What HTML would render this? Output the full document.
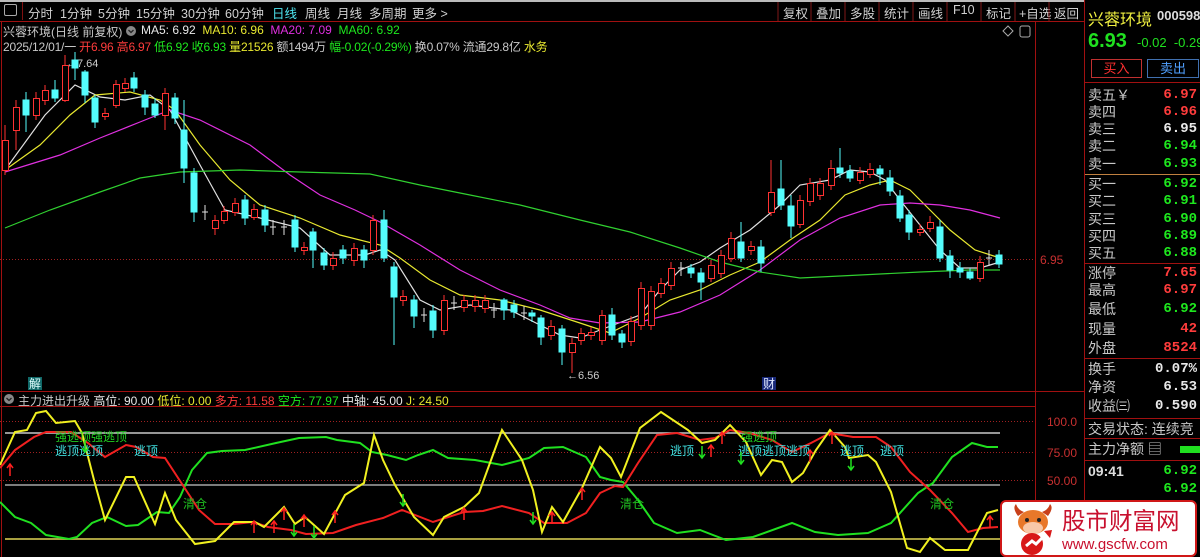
<!DOCTYPE html>
<html><head><meta charset="utf-8"><style>
*{margin:0;padding:0;box-sizing:border-box}
body{width:1200px;height:557px;background:#000;overflow:hidden;position:relative;font-family:"Liberation Sans","Noto Sans CJK SC",sans-serif;color:#c8c8c8}
.a{position:absolute;white-space:nowrap}
.tb{font-size:12.5px;top:3px;color:#d0d0d0}
.rp{position:absolute;left:1085px;width:115px;font-size:14px}
.row{position:absolute;left:3px;right:3px;height:18px;line-height:18px}
.row b{position:absolute;right:0;font-weight:bold;font-family:"Liberation Mono",monospace;font-size:14px}
.hl{position:absolute;left:0;right:0;height:1px;background:#a01010}
.r{color:#ff3c3c}.g{color:#1ee81e}.w{color:#e8e8e8}
</style></head><body>
<div class="a" style="left:0;top:0;width:1085px;height:2px;background:#bbb"></div>
<div class="a" style="left:4px;top:4px;width:13px;height:12px;border:1px solid #aaa;border-radius:2px"></div>
<div class="a" style="left:22px;top:2px;width:1px;height:18px;background:#801010"></div>
<div class="a tb" style="left:28px">分时</div>
<div class="a tb" style="left:60px">1分钟</div>
<div class="a tb" style="left:98px">5分钟</div>
<div class="a tb" style="left:136px">15分钟</div>
<div class="a tb" style="left:181px">30分钟</div>
<div class="a tb" style="left:225px">60分钟</div>
<div class="a tb" style="left:272px;color:#4ee6f0">日线</div>
<div class="a tb" style="left:305px">周线</div>
<div class="a tb" style="left:337px">月线</div>
<div class="a tb" style="left:369px">多周期</div>
<div class="a tb" style="left:412px">更多 &gt;</div>
<div class="a tb" style="left:783px">复权</div><div class="a tb" style="left:816px">叠加</div><div class="a tb" style="left:850px">多股</div><div class="a tb" style="left:884px">统计</div><div class="a tb" style="left:918px">画线</div><div class="a tb" style="left:953px">F10</div><div class="a tb" style="left:986px">标记</div><div class="a tb" style="left:1019px">+自选</div><div class="a tb" style="left:1054px">返回</div>
<svg class="a" style="left:0;top:0" width="1085" height="557">
<g stroke="#801818" stroke-width="1">
<line x1="778" y1="2" x2="778" y2="21"/><line x1="811" y1="2" x2="811" y2="21"/><line x1="845" y1="2" x2="845" y2="21"/><line x1="879" y1="2" x2="879" y2="21"/><line x1="913" y1="2" x2="913" y2="21"/><line x1="947" y1="2" x2="947" y2="21"/><line x1="981" y1="2" x2="981" y2="21"/><line x1="1015" y1="2" x2="1015" y2="21"/><line x1="1049" y1="2" x2="1049" y2="21"/>
</g>
<line x1="0" y1="21.5" x2="1085" y2="21.5" stroke="#a01010"/>
<line x1="1.5" y1="21" x2="1.5" y2="557" stroke="#a01010"/>
<line x1="1035.5" y1="21" x2="1035.5" y2="557" stroke="#a01010"/>
<line x1="1084.5" y1="0" x2="1084.5" y2="557" stroke="#a01010"/>
<line x1="0" y1="391.5" x2="1085" y2="391.5" stroke="#a01010"/>
<line x1="0" y1="406.5" x2="1035" y2="406.5" stroke="#a01010"/>
<path d="M1003 31 l5 -5 l5 5 l-5 5z" fill="none" stroke="#aaa"/>
<rect x="1020" y="26" width="10" height="11" fill="none" stroke="#aaa" rx="2"/>
<line x1="0" y1="259.5" x2="1035" y2="259.5" stroke="#a02020" stroke-dasharray="1 2"/>
<text x="1040" y="264" fill="#c83030" font-size="12">6.95</text>
<g fill="none" stroke-width="1.2">
<polyline stroke="#e0e0e0" points="5,170 45,115 75,85 100,97 125,100 150,95 170,110 200,165 225,210 260,218 300,228 330,255 365,255 380,250 395,260 420,300 440,310 470,305 510,310 540,325 560,335 580,338 600,330 640,315 660,290 680,270 700,262 720,248 750,230 780,205 800,185 830,180 850,170 870,172 885,180 900,200 920,225 940,250 960,268 980,268 1000,262"/>
<polyline stroke="#e8e830" points="5,170 40,145 70,115 95,95 130,92 160,100 175,110 200,145 230,180 260,205 300,218 340,235 380,245 400,258 430,280 460,295 500,300 540,310 580,323 610,333 640,318 670,300 700,290 730,275 760,262 790,240 820,220 845,195 870,185 890,180 910,190 930,210 950,230 975,250 1000,258"/>
<polyline stroke="#e030e0" points="5,172 60,155 100,138 140,122 170,110 200,120 250,145 290,175 320,195 355,210 380,222 420,245 460,270 500,290 540,305 570,318 600,323 640,322 680,312 720,295 760,270 800,240 840,218 880,205 910,203 940,205 970,210 1000,218"/>
<polyline stroke="#30d030" points="5,228 50,210 100,192 140,178 180,172 240,170 300,172 370,174 420,185 470,195 520,205 580,220 630,232 680,248 720,262 760,272 800,278 860,275 920,272 970,270 1000,270"/>
</g>
<text x="66" y="67" fill="#ccc" font-size="11">←7.64</text>
<text x="567" y="379" fill="#ccc" font-size="11">←6.56</text>
<rect x="28" y="377" width="14" height="13" fill="#106868"/><text x="29" y="388" fill="#e0ffff" font-size="12">解</text>
<rect x="762" y="377" width="14" height="13" fill="#182878"/><text x="763" y="388" fill="#e0e8ff" font-size="12">财</text>
<line x1="0" y1="421.5" x2="1035" y2="421.5" stroke="#a02020" stroke-dasharray="1 2"/>
<line x1="0" y1="452.5" x2="1035" y2="452.5" stroke="#a02020" stroke-dasharray="1 2"/>
<line x1="0" y1="480.5" x2="1035" y2="480.5" stroke="#a02020" stroke-dasharray="1 2"/>
<line x1="5" y1="433" x2="1000" y2="433" stroke="#c8c8c8" stroke-width="1.5"/>
<line x1="5" y1="485" x2="1000" y2="485" stroke="#c8c8c8" stroke-width="1.2"/>
<line x1="5" y1="539" x2="1000" y2="539" stroke="#a8a040" stroke-width="2"/>
<text x="1047" y="426" fill="#c83030" font-size="12">100.0</text>
<text x="1047" y="457" fill="#c83030" font-size="12">75.00</text>
<text x="1047" y="485" fill="#c83030" font-size="12">50.00</text>
<g fill="none" stroke-width="2">
<polyline stroke="#20e020" points="0,502 15,517 31,523 46,535 69,539 77,537 92,523 107,517 126,526 138,525 157,512 169,513 180,497 192,470 207,453 222,451 245,450 276,443 299,438 326,437 337,440 360,443 372,452 387,455 406,460 418,455 433,450 448,458 475,460 502,465 529,458 544,448 563,447 586,457 600,477 611,480 623,482 638,500 654,523 677,533 700,530 726,540 753,537 792,523 815,532 838,535 868,533 891,523 918,493 933,483 952,457 972,443 987,447 998,447"/>
<polyline stroke="#f02020" points="0,468 15,450 34,437 46,432 71,432 88,443 105,457 126,445 136,447 153,457 165,458 184,487 199,510 215,524 234,524 253,522 268,527 291,530 306,534 333,533 356,525 383,518 402,510 433,522 464,512 483,511 502,506 529,513 544,523 567,523 586,513 600,493 615,486 623,487 638,463 657,435 677,433 700,440 715,438 730,430 749,433 772,440 792,452 811,443 830,433 853,437 876,437 891,447 910,472 930,490 952,513 968,532 983,528 998,527"/>
<polyline stroke="#f0f020" points="0,465 15,432 27,430 36,413 46,411 56,423 75,421 82,433 94,480 105,520 126,477 134,477 155,524 165,493 176,520 195,544 215,541 234,522 255,522 264,527 284,507 295,524 305,517 324,534 345,495 364,483 374,435 383,460 395,485 414,517 433,535 444,517 464,507 479,493 502,430 522,460 533,490 542,532 552,507 563,522 582,488 600,447 611,458 621,477 640,428 661,412 688,430 702,443 715,440 730,425 746,442 761,475 772,460 782,462 792,482 803,473 816,450 830,430 845,447 849,458 868,455 876,462 891,492 907,548 920,552 930,538 945,550 968,550 987,513 998,510"/>
</g>
<g font-size="12">
<text x="55" y="441" fill="#20d020">强逃顶强逃顶</text>
<text x="55" y="455" fill="#40e0e0">逃顶逃顶</text>
<text x="134" y="455" fill="#40e0e0">逃顶</text>
<text x="183" y="508" fill="#20c020">清仓</text>
<text x="620" y="508" fill="#20c020">清仓</text>
<text x="930" y="508" fill="#20c020">清仓</text>
<text x="670" y="455" fill="#40e0e0">逃顶</text>
<text x="741" y="441" fill="#20d020">强逃顶</text>
<text x="738" y="455" fill="#40e0e0">逃顶逃顶逃顶</text>
<text x="840" y="455" fill="#40e0e0">逃顶</text>
<text x="880" y="455" fill="#40e0e0">逃顶</text>
</g>
<g stroke-width="1.5" fill="none">
<g stroke="#ff2020"><path d="M10 476v-12m-3 4l3-4l3 4"/><path d="M254 533v-12m-3 4l3-4l3 4"/><path d="M274 533v-12m-3 4l3-4l3 4"/><path d="M284 520v-12m-3 4l3-4l3 4"/><path d="M304 527v-12m-3 4l3-4l3 4"/><path d="M335 523v-12m-3 4l3-4l3 4"/><path d="M464 520v-12m-3 4l3-4l3 4"/><path d="M552 524v-12m-3 4l3-4l3 4"/><path d="M582 500v-12m-3 4l3-4l3 4"/><path d="M711 457v-12m-3 4l3-4l3 4"/><path d="M722 444v-12m-3 4l3-4l3 4"/><path d="M810 462v-12m-3 4l3-4l3 4"/><path d="M832 444v-12m-3 4l3-4l3 4"/><path d="M990 528v-12m-3 4l3-4l3 4"/></g>
<g stroke="#20e020"><path d="M85 440v12m-3-4l3 4l3-4"/><path d="M294 524v12m-3-4l3 4l3-4"/><path d="M314 526v12m-3-4l3 4l3-4"/><path d="M403 494v12m-3-4l3 4l3-4"/><path d="M533 512v12m-3-4l3 4l3-4"/><path d="M702 446v12m-3-4l3 4l3-4"/><path d="M741 452v12m-3-4l3 4l3-4"/><path d="M851 458v12m-3-4l3 4l3-4"/></g>
</g>
<circle cx="9" cy="399" r="5" fill="#888"/><path d="M6.5 398l2.5 2.5l2.5-2.5" stroke="#222" fill="none" stroke-width="1.3"/>
<circle cx="131" cy="31" r="5" fill="#888"/><path d="M128.5 30l2.5 2.5l2.5-2.5" stroke="#222" fill="none" stroke-width="1.3"/>
</svg>
<div class="a" style="left:3px;top:23px;font-size:12px">兴蓉环境(日线 前复权)</div>
<div class="a" style="left:141px;top:23px;font-size:12px"><span class="w">MA5: 6.92</span>&nbsp; <span style="color:#e8e830">MA10: 6.96</span>&nbsp; <span style="color:#e030e0">MA20: 7.09</span>&nbsp; <span class="g">MA60: 6.92</span></div>
<div class="a" style="left:3px;top:38px;font-size:12px;letter-spacing:-0.2px">2025/12/01/一 <span class="r">开6.96</span> <span class="r">高6.97</span> <span class="g">低6.92</span> <span class="g">收6.93</span> <span style="color:#e8e830">量21526</span> 额1494万 <span class="g">幅-0.02(-0.29%)</span> 换0.07% 流通29.8亿 <span style="color:#e8e830">水务</span></div>
<div class="a" style="left:18px;top:392px;font-size:12px">主力进出升级 <span class="w">高位: 90.00</span> <span style="color:#e8e830">低位: 0.00</span> <span class="r">多方: 11.58</span> <span class="g">空方: 77.97</span> <span class="w">中轴: 45.00</span> <span style="color:#e8e830">J: 24.50</span></div>

<div class="rp" style="top:0;height:557px">
<div class="a" style="left:3px;top:6px;font-size:16px;color:#f0f040">兴蓉环境</div>
<div class="a" style="left:72px;top:8px;font-size:13px;font-weight:bold;color:#ddd">000598</div>
<div class="a" style="left:3px;top:30px;font-size:20px;font-weight:bold;color:#20e020">6.93</div>
<div class="a" style="left:52px;top:35px;font-size:13px;color:#20e020">-0.02 &nbsp;-0.29</div>
<div class="a" style="left:6px;top:59px;width:51px;height:19px;border:1px solid #c03030;color:#ff3030;font-size:13px;text-align:center;line-height:17px">买入</div>
<div class="a" style="left:62px;top:59px;width:52px;height:19px;border:1px solid #4070b0;color:#50a0ff;font-size:13px;text-align:center;line-height:17px">卖出</div>
<div class="hl" style="top:82px"></div>
<div class="row" style="top:86px">卖五￥<b class="r">6.97</b></div>
<div class="row" style="top:103px">卖四<b class="r">6.96</b></div>
<div class="row" style="top:120px">卖三<b class="w">6.95</b></div>
<div class="row" style="top:137px">卖二<b class="g">6.94</b></div>
<div class="row" style="top:155px">卖一<b class="g">6.93</b></div>
<div class="hl" style="top:174px;background:#c08040"></div>
<div class="row" style="top:175px">买一<b class="g">6.92</b></div>
<div class="row" style="top:192px">买二<b class="g">6.91</b></div>
<div class="row" style="top:210px">买三<b class="g">6.90</b></div>
<div class="row" style="top:227px">买四<b class="g">6.89</b></div>
<div class="row" style="top:244px">买五<b class="g">6.88</b></div>
<div class="hl" style="top:263px"></div>
<div class="row" style="top:264px">涨停<b class="r">7.65</b></div>
<div class="row" style="top:281px">最高<b class="r">6.97</b></div>
<div class="row" style="top:300px">最低<b class="g">6.92</b></div>
<div class="row" style="top:320px">现量<b class="r">42</b></div>
<div class="row" style="top:339px">外盘<b class="r">8524</b></div>
<div class="hl" style="top:358px"></div>
<div class="row" style="top:360px">换手<b class="w">0.07%</b></div>
<div class="row" style="top:378px">净资<b class="w">6.53</b></div>
<div class="row" style="top:397px">收益㈢<b class="w">0.590</b></div>
<div class="hl" style="top:418px"></div>
<div class="row" style="top:420px">交易状态: 连续竞</div>
<div class="hl" style="top:438px"></div>
<div class="row" style="top:440px">主力净额 ▤<span style="position:absolute;right:-3px;top:6px;width:20px;height:7px;background:#20e020"></span></div>
<div class="hl" style="top:460px"></div>
<div class="row" style="top:462px;font-weight:bold;color:#ddd">09:41<b class="g">6.92</b></div>
<div class="row" style="top:480px"><b class="g">6.92</b></div>
</div>

<div class="a" style="left:1000px;top:500px;width:197px;height:57px;background:#fff;border:2px solid #d01818;border-radius:6px"></div>
<svg class="a" style="left:1008px;top:504px" width="50" height="52">
<path d="M10 12 q-6 -8 -2 -12 q2 6 8 8z M40 12 q6 -8 2 -12 q-2 6 -8 8z" fill="#c8401a"/>
<ellipse cx="25" cy="18" rx="15" ry="12" fill="#e8782a"/>
<ellipse cx="25" cy="24" rx="10" ry="6" fill="#f8c8a8"/>
<circle cx="19" cy="16" r="2" fill="#222"/><circle cx="31" cy="16" r="2" fill="#222"/>
<circle cx="24" cy="40" r="11" fill="#d81818"/>
<path d="M18 42 l6 -5 l4 3 l10 -10" stroke="#fff" stroke-width="3" fill="none"/>
<path d="M36 27 l8 -1 l-2 8z" fill="#d81818"/>
</svg>
<div class="a" style="left:1062px;top:502px;font-size:23.5px;color:#c8102e;font-family:'Noto Sans CJK SC',sans-serif">股市财富网</div>
<div class="a" style="left:1062px;top:536px;font-size:15px;color:#c8102e">www.gscfw.com</div>

<svg class="a" style="left:0;top:0;pointer-events:none" width="1035" height="392">
<g stroke="#ff3232" fill="#000" stroke-width="1">
<path fill="none" d="M5 125V175M16 100V150M36 92V120M45 85V105M65 55V102M105 108V120M116 80V108M125 78V92M165 88V130M215 215V235M224 206V224M235 198V216M254 204V220M304 242V255M333 252V270M354 243V266M373 215V255M403 290V306M444 295V335M464 295V312M475 295V312M485 295V313M551 320V340M572 338V373M581 328V345M591 327V340M602 310V345M631 316V346M641 282V330M651 286V330M661 278V298M671 262V290M711 260V282M721 250V278M731 232V262M751 241V255M771 160V216M800 195V228M810 178V206M820 178V200M831 160V190M860 167V184M870 163V178M920 224V236M930 216V232M980 256V282"/>
<rect x="2.5" y="140.5" width="6" height="30"/><rect x="13.5" y="107.5" width="6" height="23"/><rect x="33.5" y="98.5" width="6" height="17"/><rect x="42.5" y="90.5" width="6" height="10"/><rect x="62.5" y="65.5" width="6" height="35"/><rect x="102.5" y="113.5" width="6" height="3"/><rect x="113.5" y="84.5" width="6" height="21"/><rect x="122.5" y="83.5" width="6" height="5"/><rect x="162.5" y="93.5" width="6" height="22"/><rect x="212.5" y="220.5" width="6" height="8"/><rect x="221.5" y="211.5" width="6" height="9"/><rect x="232.5" y="203.5" width="6" height="9"/><rect x="251.5" y="209.5" width="6" height="8"/><rect x="301.5" y="247.5" width="6" height="3"/><rect x="330.5" y="258.5" width="6" height="7"/><rect x="351.5" y="248.5" width="6" height="12"/><rect x="370.5" y="220.5" width="6" height="30"/><rect x="400.5" y="296.5" width="6" height="4"/><rect x="441.5" y="300.5" width="6" height="30"/><rect x="461.5" y="300.5" width="6" height="7"/><rect x="472.5" y="300.5" width="6" height="6"/><rect x="482.5" y="300.5" width="6" height="8"/><rect x="548.5" y="326.5" width="6" height="9"/><rect x="569.5" y="343.5" width="6" height="9"/><rect x="578.5" y="333.5" width="6" height="7"/><rect x="588.5" y="332.5" width="6" height="3"/><rect x="599.5" y="315.5" width="6" height="25"/><rect x="628.5" y="321.5" width="6" height="20"/><rect x="638.5" y="288.5" width="6" height="37"/><rect x="648.5" y="291.5" width="6" height="34"/><rect x="658.5" y="283.5" width="6" height="10"/><rect x="668.5" y="268.5" width="6" height="17"/><rect x="708.5" y="265.5" width="6" height="13"/><rect x="718.5" y="255.5" width="6" height="18"/><rect x="728.5" y="238.5" width="6" height="20"/><rect x="748.5" y="246.5" width="6" height="4"/><rect x="768.5" y="192.5" width="6" height="20"/><rect x="797.5" y="200.5" width="6" height="24"/><rect x="807.5" y="183.5" width="6" height="18"/><rect x="817.5" y="183.5" width="6" height="12"/><rect x="828.5" y="168.5" width="6" height="17"/><rect x="857.5" y="172.5" width="6" height="8"/><rect x="867.5" y="169.5" width="6" height="5"/><rect x="917.5" y="229.5" width="6" height="3"/><rect x="927.5" y="222.5" width="6" height="6"/><rect x="977.5" y="262.5" width="6" height="16"/>
</g>
<g stroke="#54fcfc" fill="#54fcfc">
<path fill="none" d="M26 92V132M55 80V102M75 52V80M85 70V103M95 95V128M134 72V92M145 90V115M155 98V118M175 93V124M184 100V183M194 168V222M245 195V225M265 205V232M295 215V252M313 228V268M324 248V270M343 245V264M364 245V268M384 210V262M394 262V345M414 295V328M433 305V338M504 298V320M514 300V318M532 310V322M541 315V345M562 325V365M612 308V340M622 330V348M691 264V278M701 268V300M741 222V262M761 240V272M781 160V210M791 195V238M840 148V178M850 165V182M880 165V185M890 170V196M900 190V222M909 210V240M940 220V262M950 250V278M960 262V278M970 268V280M999 250V268"/>
<rect x="23" y="100" width="6" height="15"/><rect x="52" y="90" width="6" height="8"/><rect x="72" y="60" width="6" height="8"/><rect x="82" y="72" width="6" height="23"/><rect x="92" y="98" width="6" height="24"/><rect x="131" y="78" width="6" height="10"/><rect x="142" y="95" width="6" height="12"/><rect x="152" y="104" width="6" height="11"/><rect x="172" y="98" width="6" height="20"/><rect x="181" y="130" width="6" height="38"/><rect x="191" y="173" width="6" height="39"/><rect x="242" y="200" width="6" height="18"/><rect x="262" y="210" width="6" height="15"/><rect x="292" y="220" width="6" height="27"/><rect x="310" y="232" width="6" height="18"/><rect x="321" y="253" width="6" height="12"/><rect x="340" y="250" width="6" height="8"/><rect x="361" y="250" width="6" height="10"/><rect x="381" y="220" width="6" height="38"/><rect x="391" y="267" width="6" height="30"/><rect x="411" y="300" width="6" height="16"/><rect x="430" y="311" width="6" height="19"/><rect x="501" y="300" width="6" height="10"/><rect x="511" y="305" width="6" height="7"/><rect x="529" y="313" width="6" height="3"/><rect x="538" y="318" width="6" height="19"/><rect x="559" y="329" width="6" height="23"/><rect x="609" y="315" width="6" height="20"/><rect x="619" y="334" width="6" height="8"/><rect x="688" y="268" width="6" height="5"/><rect x="698" y="273" width="6" height="9"/><rect x="738" y="242" width="6" height="16"/><rect x="758" y="247" width="6" height="16"/><rect x="778" y="189" width="6" height="16"/><rect x="788" y="206" width="6" height="20"/><rect x="837" y="168" width="6" height="5"/><rect x="847" y="171" width="6" height="7"/><rect x="877" y="169" width="6" height="5"/><rect x="887" y="178" width="6" height="13"/><rect x="897" y="196" width="6" height="22"/><rect x="906" y="215" width="6" height="17"/><rect x="937" y="227" width="6" height="31"/><rect x="947" y="256" width="6" height="14"/><rect x="957" y="268" width="6" height="4"/><rect x="967" y="272" width="6" height="6"/><rect x="996" y="255" width="6" height="9"/>
</g>
<g stroke="#e0e0e0" fill="none">
<path d="M202 212h6M205 205V220M270 227h6M273 220V235M281 227h6M284 220V235M421 315h6M424 308V322M451 303h6M454 296V310M491 310h6M494 303V318M521 313h6M524 306V320M678 268h6M681 262V276M986 258h6M989 250V266"/>
</g>
</svg>
</body></html>
